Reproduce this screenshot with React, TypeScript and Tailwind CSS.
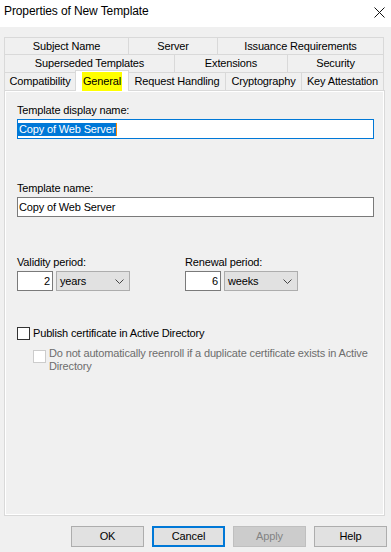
import React from 'react'

const tabRows = [
  [
    { label: 'Subject Name', w: 'w-[124px]' },
    { label: 'Server', w: 'w-[89px]' },
    { label: 'Issuance Requirements', w: 'w-[167px]', last: true },
  ],
  [
    { label: 'Superseded Templates', w: 'w-[170px]' },
    { label: 'Extensions', w: 'w-[113px]' },
    { label: 'Security', w: 'w-[97px]', last: true },
  ],
]

function Chevron() {
  return (
    <svg width="9" height="5" viewBox="0 0 9 5" className="shrink-0">
      <path d="M0.5 0.5 L4.5 4.5 L8.5 0.5" fill="none" stroke="#444" strokeWidth="1" />
    </svg>
  )
}

function NumberBox({ value }: { value: string }) {
  return (
    <div className="w-[36px] h-[20px] border border-[#7a7a7a] bg-white flex items-center justify-end pr-[2px]">
      {value}
    </div>
  )
}

function Combo({ value }: { value: string }) {
  return (
    <div className="w-[74px] h-[20px] border border-[#adadad] bg-[#e1e1e1] flex items-center justify-between pl-[3px] pr-[5px]">
      <span>{value}</span>
      <Chevron />
    </div>
  )
}

function Button({ label, focused, disabled }: { label: string; focused?: boolean; disabled?: boolean }) {
  return (
    <div
      className={`w-[73px] h-[21px] flex items-center justify-center ${
        focused
          ? 'border-2 border-[#0078d7] bg-[#e1e1e1]'
          : disabled
            ? 'border border-[#bfbfbf] bg-[#cccccc] text-[#838383]'
            : 'border border-[#adadad] bg-[#e1e1e1]'
      }`}
    >
      {label}
    </div>
  )
}

export default function App() {
  return (
    <div className="w-[391px] h-[552px] bg-[#f0f0f0] text-black text-[11px] tracking-[-0.15px] flex flex-col font-['Liberation_Sans',Arial,sans-serif] overflow-hidden">
      {/* Title bar */}
      <div className="h-[27px] shrink-0 bg-white flex justify-between pl-[4px] pr-[6px]">
        <div className="pt-[4px] text-[12px] leading-[15px] tracking-[-0.1px]">Properties of New Template</div>
        <svg width="11" height="11" viewBox="0 0 11 11" className="mt-[7px]">
          <path d="M0.5 0.5 L10.5 10.5 M10.5 0.5 L0.5 10.5" stroke="#111" strokeWidth="1" />
        </svg>
      </div>

      {/* Tabs */}
      <div className="mt-[10px] ml-[4px] flex flex-col">
        {tabRows.map((row, i) => (
          <div key={i} className={`flex ${i === 0 ? 'h-[17px]' : 'h-[18px]'}`}>
            {row.map((tab) => (
              <div
                key={tab.label}
                className={`${tab.w} h-full border-t border-l border-[#d9d9d9] flex items-center justify-center ${
                  tab.last ? 'border-r' : ''
                }`}
              >
                {tab.label}
              </div>
            ))}
          </div>
        ))}
        <div className="flex h-[18px] items-end">
          <div className="w-[71px] h-[18px] border-t border-l border-[#d9d9d9] flex items-center justify-center">
            Compatibility
          </div>
          <div className="relative z-10 w-[54px] h-[21px] -mb-px bg-white border-t border-l border-r border-[#d9d9d9] flex justify-center pt-px">
            <span className="bg-[#ffff00] leading-[18px] px-px">General</span>
          </div>
          <div className="w-[96px] h-[18px] border-t border-[#d9d9d9] flex items-center justify-center">
            Request Handling
          </div>
          <div className="w-[76px] h-[18px] border-t border-l border-[#d9d9d9] flex items-center justify-center">
            Cryptography
          </div>
          <div className="w-[83px] h-[18px] border-t border-l border-r border-[#d9d9d9] flex items-center justify-center">
            Key Attestation
          </div>
        </div>
      </div>

      {/* Panel */}
      <div className="ml-[4px] w-[381px] h-[426px] shrink-0 border border-[#d9d9d9] bg-white p-px">
        <div className="h-full bg-[#f0f0f0] pl-[11px] pt-[11px] flex flex-col">
          <div className="leading-[14px]">Template display name:</div>
          <div className="mt-[2px] w-[357px] h-[20px] border border-[#0078d7] bg-white flex items-center">
            <span className="bg-[#0078d7] text-white leading-[13px] pl-px pr-px">Copy of Web Server</span>
            <span className="w-px h-[13px] bg-[#ff8a00]" />
          </div>

          <div className="mt-[42px] leading-[14px]">Template name:</div>
          <div className="mt-[2px] w-[357px] h-[20px] border border-[#7a7a7a] bg-white flex items-center pl-px">
            Copy of Web Server
          </div>

          <div className="mt-[38px] flex">
            <div className="w-[168px] flex flex-col">
              <div className="leading-[14px]">Validity period:</div>
              <div className="mt-[2px] flex gap-[3px]">
                <NumberBox value="2" />
                <Combo value="years" />
              </div>
            </div>
            <div className="flex flex-col">
              <div className="leading-[14px]">Renewal period:</div>
              <div className="mt-[2px] flex gap-[3px]">
                <NumberBox value="6" />
                <Combo value="weeks" />
              </div>
            </div>
          </div>

          <div className="mt-[36px] h-[13px] flex items-center gap-[3px]">
            <div className="w-[13px] h-[13px] border border-[#333333] bg-white" />
            <span className="leading-[13px]">Publish certificate in Active Directory</span>
          </div>

          <div className="mt-[7px] pl-[16px] flex items-start gap-[3px] text-[#6d6d6d]">
            <div className="mt-[3px] w-[13px] h-[13px] shrink-0 border border-[#cccccc] bg-white" />
            <div className="leading-[13px]">
              Do not automatically reenroll if a duplicate certificate exists in Active
              <br />
              Directory
            </div>
          </div>
        </div>
      </div>

      {/* Buttons */}
      <div className="mt-[10px] pl-[71px] flex gap-[8px]">
        <Button label="OK" />
        <Button label="Cancel" focused />
        <Button label="Apply" disabled />
        <Button label="Help" />
      </div>
    </div>
  )
}
